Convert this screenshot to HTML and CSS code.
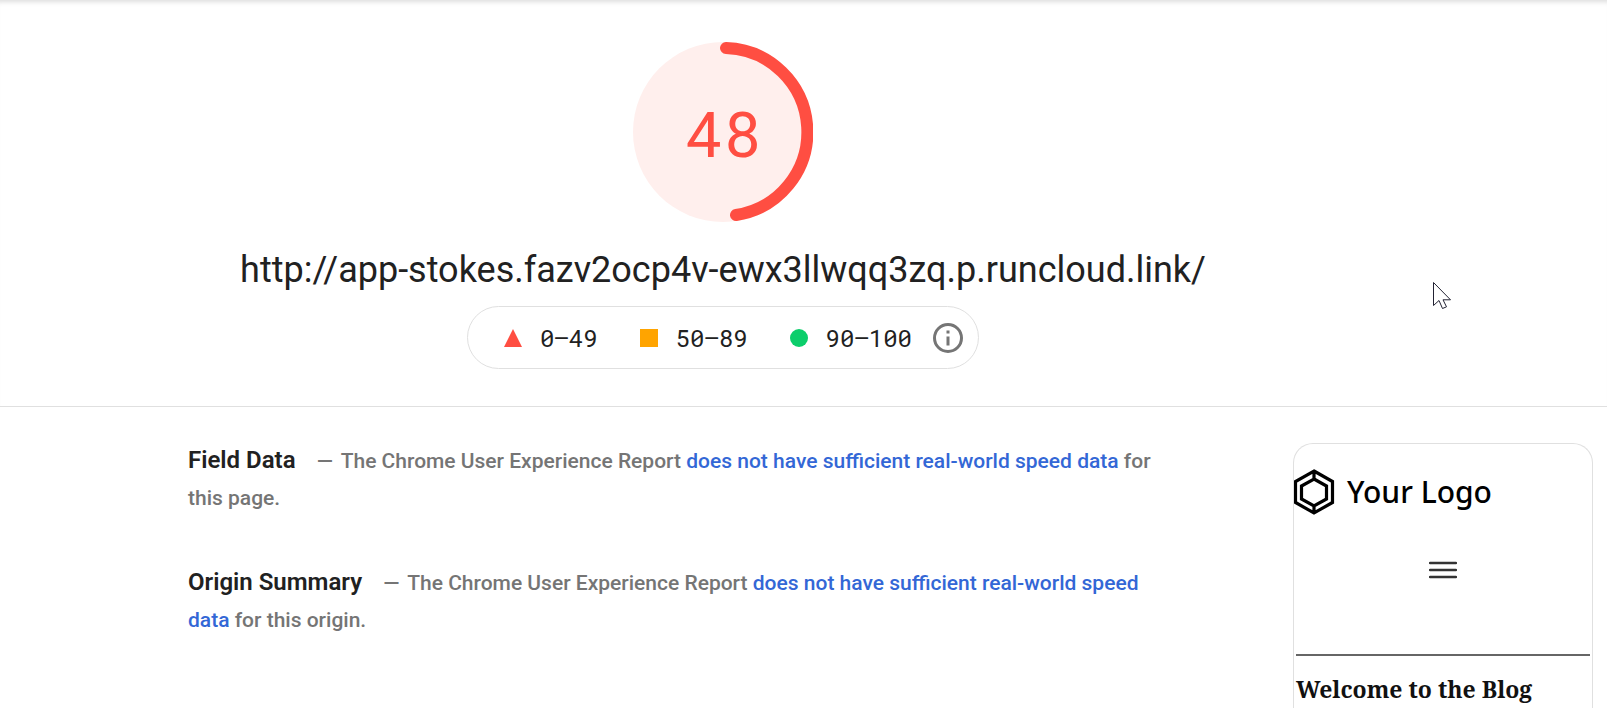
FILE: index.html
```
<!DOCTYPE html>
<html lang="en">
<head>
    <meta charset="UTF-8">
    <meta name="viewport" content="width=device-width, initial-scale=1.0">
    <title>PageSpeed Insights</title>
    <link rel="stylesheet" href="styles.css">
</head>
<body>
    <header class="summary">
        <div class="gauge">
            <svg class="gauge-arc" viewBox="0 0 180 180" aria-hidden="true">
                <circle class="gauge-base" cx="90" cy="90" r="90"/>
                <path class="gauge-value" d="M93 6 A84 84 0 0 1 103 173"/>
            </svg>
            <div class="gauge-score">48</div>
        </div>
        <h1 class="url">http://app-stokes.fazv2ocp4v-ewx3llwqq3zq.p.runcloud.link/</h1>
        <div class="scale">
            <span class="range"><svg class="marker" viewBox="0 0 18 18"><path fill="#ff4e42" d="M9 0l9 18H0z"/></svg>0–49</span>
            <span class="range"><svg class="marker" viewBox="0 0 18 18"><path fill="#ffa400" d="M0 0h18v18H0z"/></svg>50–89</span>
            <span class="range"><svg class="marker" viewBox="0 0 18 18"><circle fill="#0cce6b" cx="9" cy="9" r="9"/></svg>90–100</span>
            <button class="info" type="button" aria-label="About the score scale">
                <svg viewBox="0 0 30 30" width="30" height="30">
                    <circle cx="15" cy="15" r="13.5" fill="none" stroke="#757575" stroke-width="3"/>
                    <path fill="#757575" d="M13.5 7.5h3v3h-3zM13.5 13.5h3v9h-3z"/>
                </svg>
            </button>
        </div>
        <svg class="pointer" viewBox="0 0 18 27" aria-hidden="true">
            <path d="M.5 .5V23.5L6 18.5L9.5 26.5L13.5 24.8L10 17.8H17.5z" fill="#fff" stroke="#223" stroke-width="1"/>
        </svg>
    </header>

    <main class="report">
        <div class="details">
            <section class="metric-group">
                <h2>Field Data</h2>
                <p><span class="dash">—</span> The Chrome User Experience Report <a href="#">does not have sufficient real-world speed data</a> for this page.</p>
            </section>
            <section class="metric-group">
                <h2>Origin Summary</h2>
                <p><span class="dash">—</span> The Chrome User Experience Report <a href="#">does not have sufficient real-world speed data</a> for this origin.</p>
            </section>
        </div>

        <!-- preview of the tested page -->
        <aside class="preview">
            <div class="logo">
                <svg viewBox="0 0 41 46" width="41" height="46" aria-hidden="true">
                    <path d="M20 2L38.5 12.5V33.5L20 44L1.5 33.5V12.5z M20 10L32.5 17V30L20 37L7.5 30V17z M20 2V10 M20 37V44" fill="none" stroke="#000" stroke-width="3.2"/>
                </svg>
                <span>Your Logo</span>
            </div>
            <button class="menu" type="button" aria-label="Menu">
                <svg viewBox="0 0 28 18" width="28" height="18">
                    <path d="M1 2h26M1 9h26M1 16h26" stroke="#333" stroke-width="2.5" stroke-linecap="round"/>
                </svg>
            </button>
            <hr>
            <h3>Welcome to the Blog</h3>
        </aside>
    </main>
</body>
</html>
```
FILE: styles.css
```
* { box-sizing: border-box; }
body { display: flex; flex-direction: column; min-height: 100vh; margin: 0; font-family: Roboto, "Open Sans", sans-serif; color: #212121; background: #fff; }
h1, h2, h3, p { margin: 0; }
button { padding: 0; border: 0; background: none; cursor: pointer; }
svg { display: block; }

/* score, url and scale */
.summary {
    position: relative;
    display: flex;
    flex-direction: column;
    align-items: center;
    padding: 42px 349px 37px 188px;
    border-bottom: 1px solid #e0e0e0;
    box-shadow: inset 0 6px 5px -4px #ddd;
}
.gauge { display: grid; width: 180px; height: 180px; place-items: center; }
.gauge > * { grid-area: 1 / 1; }
.gauge-arc { width: 180px; height: 180px; }
.gauge-base { fill: #ffefed; }
.gauge-value { fill: none; stroke: #ff4e42; stroke-width: 12; stroke-linecap: round; }
.gauge-score { font: 63px/1 "Roboto Mono", "DejaVu Sans Mono", monospace; color: #ff4e42; }

.url { margin: 24px 0 12px; font-size: 36px; line-height: 48px; font-weight: 400; white-space: nowrap; }

.scale { display: flex; align-items: center; height: 63px; padding: 0 15px 0 36px; border: 1px solid #e0e0e0; border-radius: 32px; }
.range { display: flex; align-items: center; gap: 18px; margin-right: 42px; font: 24px/36px "Roboto Mono", "DejaVu Sans Mono", monospace; white-space: nowrap; }
.range:nth-child(3) { margin-right: 21px; }
.marker { width: 18px; height: 18px; }

.pointer { position: absolute; top: 282px; right: 156px; width: 18px; height: 27px; }

/* report body */
.report { display: grid; flex: 1; grid-template-columns: 1fr 300px; gap: 35px; padding: 36px 14px 0 188px; }
.details { padding-right: 90px; }
.metric-group { margin-bottom: 48px; font-size: 21px; line-height: 37px; }
.metric-group h2 { display: inline; margin-right: 16px; font-size: 24px; line-height: 24px; font-weight: 600; }
.metric-group p { display: inline; font-weight: 500; color: #757575; }
.metric-group a { color: #3367d6; text-decoration: none; }
.dash { margin-right: 3px; }

.preview { border: 1px solid #e0e0e0; border-bottom: 0; border-radius: 20px 20px 0 0; color: #000; }
.logo { display: flex; align-items: center; gap: 12px; margin-top: 25px; font: 500 30px/46px "Noto Sans", "Open Sans", sans-serif; }
.menu { display: block; margin: 46px auto 75px; }
.preview hr { margin: 0 2px; border: 0; border-top: 2px solid #666; }
.preview h3 { margin: 18px 2px 0; font: bold 23px/30px "Noto Serif", "Liberation Serif", serif; color: #111; }
```
